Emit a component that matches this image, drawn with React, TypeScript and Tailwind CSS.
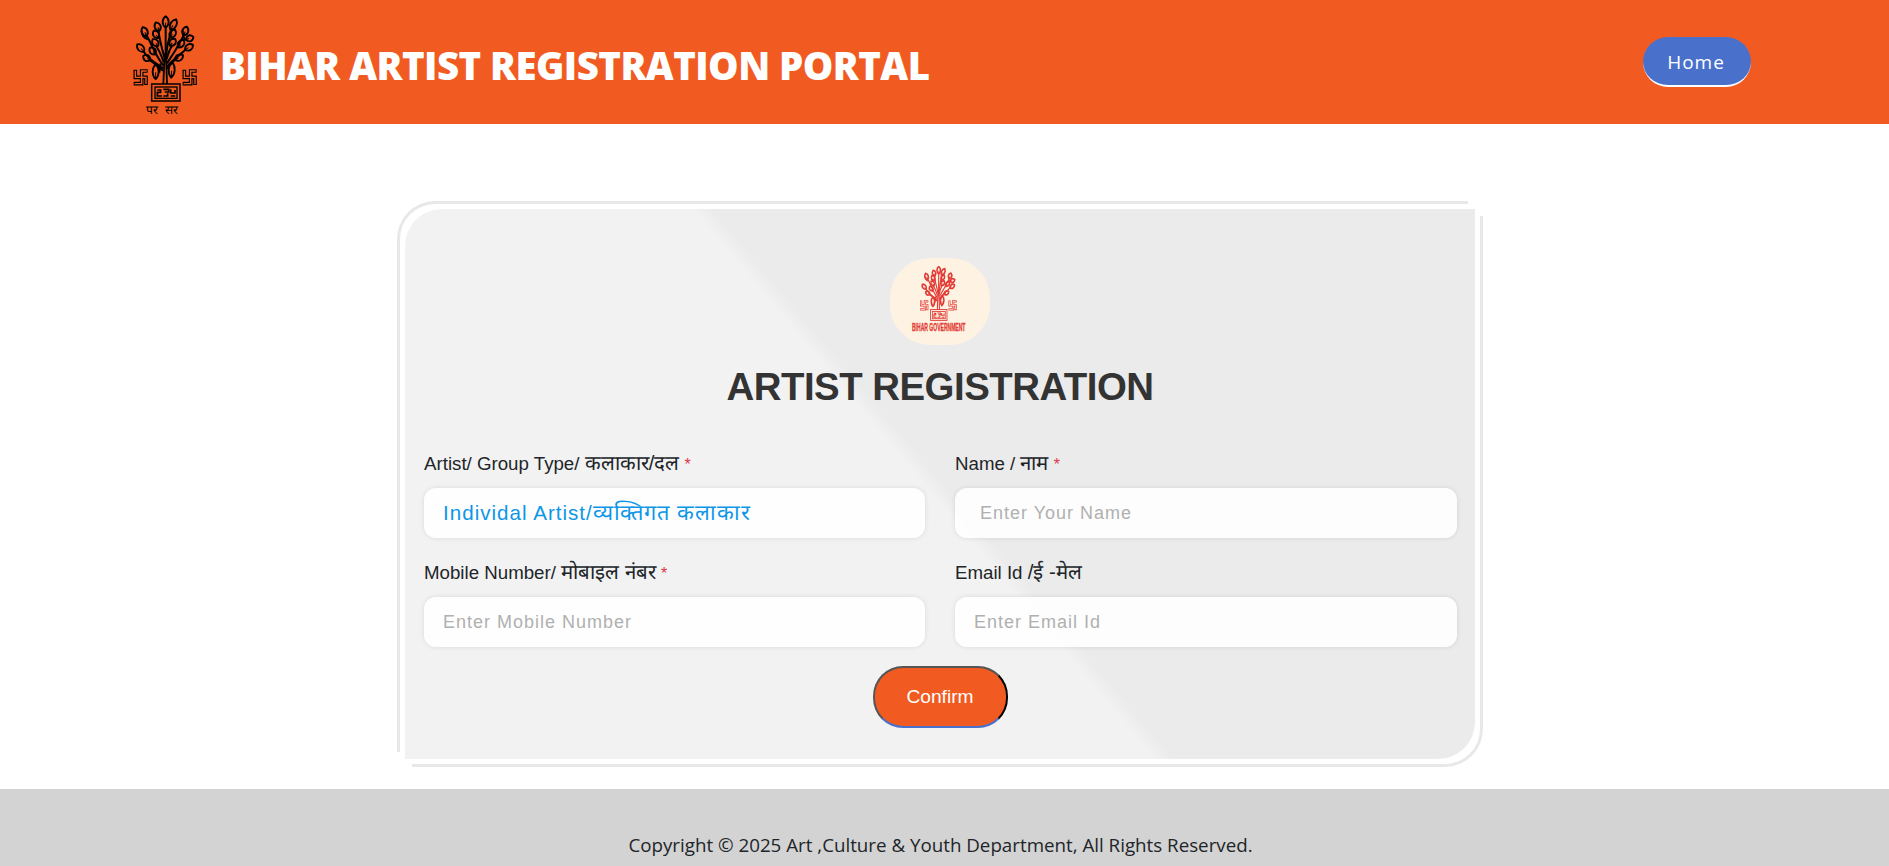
import React from "react";

const leaves = [
  { x: 137, y: 66, r: 0, l: 17 },
  { x: 113, y: 80, r: -22, l: 14 },
  { x: 160, y: 74, r: 28, l: 18 },
  { x: 108, y: 103, r: -30, l: 13 },
  { x: 158, y: 101, r: 32, l: 14 },
  { x: 106, y: 128, r: -38, l: 13 },
  { x: 158, y: 127, r: 36, l: 13 },
  { x: 74, y: 95, r: -22, l: 15 },
  { x: 196, y: 93, r: 18, l: 14 },
  { x: 62, y: 144, r: -42, l: 15 },
  { x: 207, y: 142, r: 58, l: 14 },
  { x: 98, y: 153, r: -38, l: 13 },
  { x: 183, y: 131, r: 35, l: 14 },
  { x: 80, y: 174, r: -60, l: 12 },
  { x: 177, y: 173, r: 60, l: 14 },
  { x: 209, y: 115, r: 68, l: 12 },
  { x: 107, y: 215, r: 0, l: 22 },
  { x: 155, y: 210, r: 4, l: 23 },
];

const branches = [
  "M137 84V180",
  "M133 172C127 150 119 120 115 92",
  "M139 165C141 134 148 111 155 92",
  "M131 186C122 160 113 145 108 138",
  "M140 178C145 159 150 145 156 138",
  "M130 196C105 165 96 133 79 105",
  "M141 190C159 164 170 147 190 109",
  "M130 205C108 190 86 179 70 154",
  "M141 200C160 177 178 167 198 148",
  "M129 212C110 196 99 186 88 180",
  "M142 207C150 192 158 184 168 177",
  "M65 92C65 107 75 115 84 118",
  "M188 91C188 104 190 118 199 119",
  "M122 190L118 218",
];

// outlined arms: a wide stroke with a narrower one in the ground colour on top
function SideMark({ x, hollow }: { x: number; hollow: string }) {
  return (
    <g transform={`translate(${x} 209)`}>
      <path d="M42 4H24V42H0M5 0V23H37V46" strokeWidth="11" />
      <path d="M39 4H24V42H3M5 3V23H37V43" strokeWidth="4" className={hollow} />
    </g>
  );
}

type EmblemProps = {
  className: string;
  viewBox: string;
  hollow: string;
  leafWidth: number;
};

function Emblem({ className, viewBox, hollow, leafWidth }: EmblemProps) {
  return (
    <svg
      className={className}
      viewBox={viewBox}
      preserveAspectRatio="none"
      fill="none"
      stroke="currentColor"
      strokeWidth="5"
    >
      {branches.map((d) => (
        <path key={d} d={d} strokeWidth="6" />
      ))}
      {leaves.map((leaf) => (
        <g key={`${leaf.x}-${leaf.y}`} transform={`translate(${leaf.x} ${leaf.y}) rotate(${leaf.r})`}>
          <path
            d={`M0 ${-leaf.l}C12 ${-leaf.l / 2} 12 ${leaf.l / 2} 0 ${leaf.l}C-12 ${leaf.l / 2} -12 ${-leaf.l / 2} 0 ${-leaf.l}Z`}
            strokeWidth={leafWidth}
          />
          <path d={`M0 ${leaf.l}V2`} strokeWidth="3" />
        </g>
      ))}
      <path d="M134 160L130 252M138 160L141 252" strokeWidth="5.5" />
      <SideMark x={41} hollow={hollow} />
      <SideMark x={188} hollow={hollow} />
      <rect x="95" y="252" width="85" height="51" strokeWidth="4.5" />
      <rect x="105" y="261" width="66" height="34" strokeWidth="4" />
      <path d="M112 270H122V277H112V288H126M130 268H146V276H134M130 288H143V280M152 268V279H165V270M152 288H166" />
    </svg>
  );
}

const fields = [
  { label: "Artist/ Group Type/", hindi: "कलाकार/दल", required: true, value: "Individal Artist/", valueHindi: "व्यक्तिगत कलाकार", pad: "pl-[19px]" },
  { label: "Name /", hindi: "नाम", required: true, placeholder: "Enter Your Name", pad: "pl-[25px]" },
  { label: "Mobile Number/", hindi: "मोबाइल नंबर", required: true, placeholder: "Enter Mobile Number", pad: "pl-[19px]" },
  { label: "Email Id", hindi: "/ई -मेल", required: false, placeholder: "Enter Email Id", pad: "pl-[19px]" },
];

export default function App() {
  return (
    <div className="flex h-[866px] flex-col overflow-hidden bg-white font-['Open_Sans',sans-serif] text-[#212529]">
      <header className="flex h-[124px] shrink-0 items-start bg-[#f15b22] pl-[120px] pr-[138px]">
        <div className="relative h-[124px] w-[100px]">
          <Emblem
            className="h-[124px] w-[100px] text-black"
            viewBox="0 0 300 372"
            hollow="stroke-[#f15b22]"
            leafWidth={5.5}
          />
          <div className="absolute left-[26px] top-[102px] flex gap-[7px] text-[12px] leading-[16px] whitespace-nowrap text-black">
            <span>पर</span>
            <span>सर</span>
          </div>
        </div>
        <h1 className="mt-[40px] text-[38.4px] font-extrabold leading-[50px] tracking-[-0.55px] whitespace-nowrap text-white">
          BIHAR ARTIST REGISTRATION PORTAL
        </h1>
        <button className="ml-auto mt-[37px] h-[50px] w-[108px] rounded-[25px] border-b-2 border-white bg-[#4971cc] pr-[2px] pt-[2px] text-[19px] font-medium tracking-[1px] text-white">
          Home
        </button>
      </header>

      <main className="flex h-[665px] shrink-0 pl-[405px] pt-[85px] font-['Liberation_Sans',sans-serif]">
        <section className="relative h-[550px] w-[1070px] rounded-br-[37px] rounded-tl-[37px] bg-[linear-gradient(50deg,#f2f2f2_48.9%,#ebebeb_50.2%)]">
          <div className="pointer-events-none absolute -left-2 -top-2 h-[551px] w-[1071px] rounded-tl-[38px] border-l-[3px] border-t-[3px] border-[#e8e8e8]" />
          <div className="pointer-events-none absolute -bottom-2 -right-2 h-[551px] w-[1071px] rounded-br-[38px] border-b-[3px] border-r-[3px] border-[#e8e8e8]" />

          <div className="flex flex-col items-center pt-[49px]">
            <div className="flex h-[87px] w-[100px] flex-col items-center rounded-[40px] bg-[#fef3e2] pr-[3px] pt-[8px] text-[#e23a35]">
              <Emblem
                className="h-[55px] w-[37px] shrink-0"
                viewBox="40 46 192 260"
                hollow="stroke-[#fef3e2]"
                leafWidth={8}
              />
              <span className="-mx-6 scale-x-[0.48] text-[10.5px] font-bold leading-[12px] whitespace-nowrap [-webkit-text-stroke:0.3px_#e23a35]">
                BIHAR GOVERNMENT
              </span>
            </div>
            <h2 className="mt-[18px] text-[38.4px] font-bold leading-[48px] tracking-[-0.5px] whitespace-nowrap text-[#333]">
              ARTIST REGISTRATION
            </h2>
          </div>

          <div className="grid grid-cols-[501px_502px] gap-x-[30px] pl-[19px] pt-[36px]">
            {fields.map((field) => (
              <div key={field.label} className="h-[109px]">
                <label className="block h-[41px] pt-[3px] text-[18.7px] leading-[27px] whitespace-nowrap">
                  {field.label} <span className="text-[20.4px] leading-none">{field.hindi}</span>{" "}
                  {field.required && <span className="text-[16px] text-[#dc3545]">*</span>}
                </label>
                <div
                  className={`flex h-[50px] items-center rounded-[12px] bg-white/90 text-[18px] tracking-[1px] whitespace-nowrap shadow-[0_0_5px_rgba(0,0,0,0.1)] ${field.pad}`}
                >
                  {field.value ? (
                    <span className="text-[20.6px] leading-[30px] text-[#0d96e8]">
                      {field.value}
                      <span className="text-[21.8px] leading-none">{field.valueHindi}</span>
                    </span>
                  ) : (
                    <span className="text-[#b0b0b0]">{field.placeholder}</span>
                  )}
                </div>
              </div>
            ))}
          </div>

          <button className="mx-auto mt-px block h-[62px] w-[135px] rounded-[30px] border-2 border-b-[#4971cc] border-l-[#555] border-r-black border-t-[#555] bg-[#f15b22] text-[19.2px] text-white">
            Confirm
          </button>
        </section>
      </main>

      <footer className="flex h-[77px] shrink-0 justify-center bg-[#d3d3d3] pr-[8px] pt-[42px] text-[18.75px] leading-[27px]">
        Copyright © 2025 Art ,Culture &amp; Youth Department, All Rights Reserved.
      </footer>
    </div>
  );
}
